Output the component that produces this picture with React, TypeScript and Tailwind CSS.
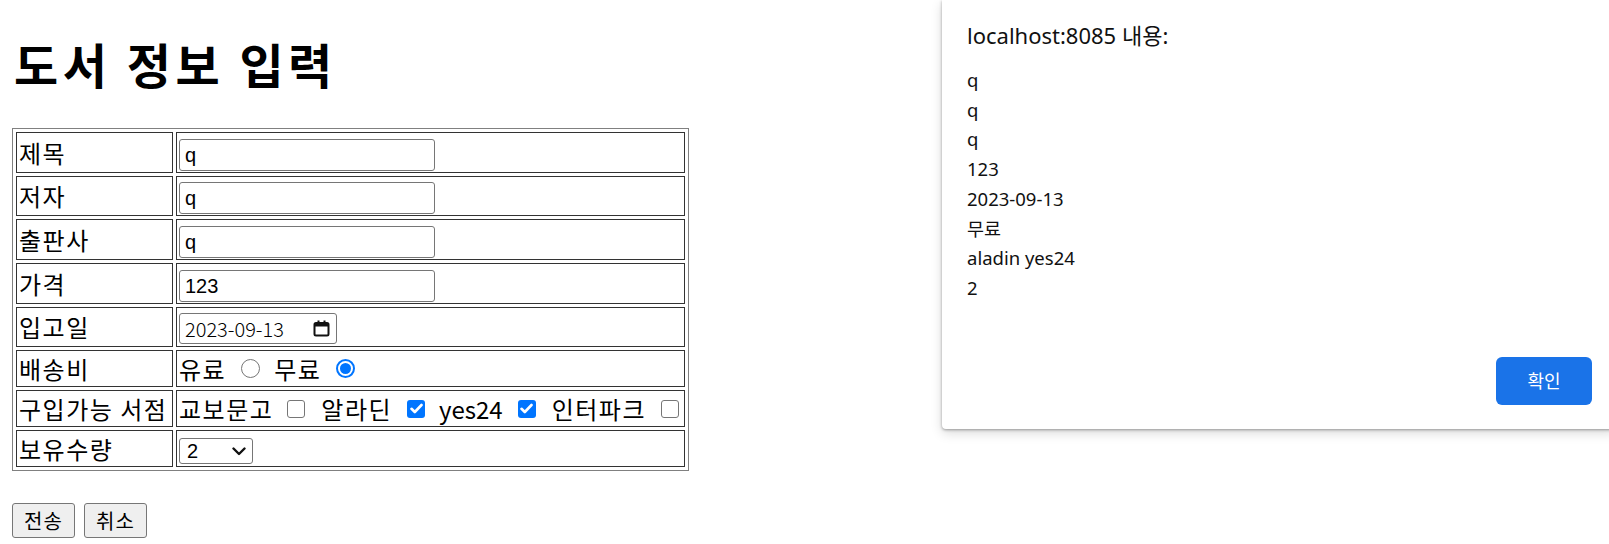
const kr = "font-['Noto_Sans_CJK_KR',sans-serif]";

function Radio({ checked }: { checked?: boolean }) {
  if (checked) {
    return (
      <span className="flex h-[19px] w-[19px] items-center justify-center rounded-full border-2 border-[#0075ff] bg-white">
        <span className="block h-[11px] w-[11px] rounded-full bg-[#0075ff]" />
      </span>
    );
  }
  return <span className="block h-[19px] w-[19px] rounded-full border-[1.5px] border-[#767676] bg-white" />;
}

function Check({ checked }: { checked?: boolean }) {
  if (checked) {
    return (
      <span className="flex h-[18px] w-[18px] items-center justify-center rounded-[3px] bg-[#0075ff]">
        <svg width="13" height="11" viewBox="0 0 13 11" fill="none">
          <path d="M1.5 5.8 L4.8 9 L11.5 2" stroke="white" strokeWidth="2.6" strokeLinecap="round" strokeLinejoin="round" />
        </svg>
      </span>
    );
  }
  return <span className="block h-[18px] w-[18px] rounded-[3px] border-[1.5px] border-[#767676] bg-white" />;
}

function TextBox({ value }: { value: string }) {
  return (
    <div className="flex h-[32px] w-[256px] items-center rounded-[3px] border border-[#767676] bg-white px-[5px] font-['Liberation_Sans',sans-serif] text-[20px]">
      {value}
    </div>
  );
}

function Label({ text, h }: { text: string; h: string }) {
  return (
    <div className={`flex items-center border border-[#333333] pl-[2px] text-[24px] tracking-[1.5px] whitespace-nowrap ${h}`}>
      {text}
    </div>
  );
}

export default function App() {
  return (
    <div className={`relative h-[544px] w-[1609px] overflow-hidden bg-white text-black ${kr}`}>
      <div className="pl-[12px] pt-[31px]">
        <h1 className="h-[64px] pl-[2px] text-[48px] font-bold leading-[64px] tracking-[4.5px]">도서 정보 입력</h1>

        <div className="mt-[33px] inline-block border border-[#808080] p-[3px]">
          <div className="grid grid-cols-[157px_509px] gap-[3px]">
            <Label text="제목" h="h-[41px]" />
            <div className="flex h-[41px] items-end border border-[#333333] pb-[1px] pl-[2px]">
              <TextBox value="q" />
            </div>

            <Label text="저자" h="h-[40px]" />
            <div className="flex h-[40px] items-end border border-[#333333] pb-[1px] pl-[2px]">
              <TextBox value="q" />
            </div>

            <Label text="출판사" h="h-[41px]" />
            <div className="flex h-[41px] items-end border border-[#333333] pb-[1px] pl-[2px]">
              <TextBox value="q" />
            </div>

            <Label text="가격" h="h-[41px]" />
            <div className="flex h-[41px] items-end border border-[#333333] pb-[1px] pl-[2px]">
              <TextBox value="123" />
            </div>

            <Label text="입고일" h="h-[40px]" />
            <div className="flex h-[40px] items-end border border-[#333333] pb-[2px] pl-[2px]">
              <div className="flex h-[31px] w-[158px] items-center justify-between rounded-[3px] border border-[#767676] bg-white pl-[5px] pr-[6px] text-[20px] font-light">
                <span>2023-09-13</span>
                <svg width="17" height="17" viewBox="0 0 17 17" fill="none">
                  <rect x="1.5" y="3" width="14" height="12.5" rx="1.5" stroke="#111" strokeWidth="2" />
                  <rect x="1.5" y="3" width="14" height="3.5" fill="#111" />
                  <rect x="4.5" y="0.5" width="2" height="3" fill="#111" />
                  <rect x="10.5" y="0.5" width="2" height="3" fill="#111" />
                </svg>
              </div>
            </div>

            <Label text="배송비" h="h-[37px]" />
            <div className="flex h-[37px] items-center border border-[#333333] pl-[2px] text-[24px]">
              <span className="tracking-[1.5px]">유료</span>
              <span className="ml-[15px]"><Radio /></span>
              <span className="ml-[14px] tracking-[1.5px]">무료</span>
              <span className="ml-[15px]"><Radio checked /></span>
            </div>

            <Label text="구입가능 서점" h="h-[37px]" />
            <div className="flex h-[37px] items-center border border-[#333333] pl-[2px] text-[24px] whitespace-nowrap">
              <span className="tracking-[1.5px]">교보문고</span>
              <span className="ml-[14px]"><Check /></span>
              <span className="ml-[16px] tracking-[1.5px]">알라딘</span>
              <span className="ml-[15px]"><Check checked /></span>
              <span className="ml-[14px]">yes24</span>
              <span className="ml-[15px]"><Check checked /></span>
              <span className="ml-[16px] tracking-[1.5px]">인터파크</span>
              <span className="ml-[15px]"><Check /></span>
            </div>

            <Label text="보유수량" h="h-[37px]" />
            <div className="flex h-[37px] items-end border border-[#333333] pb-[2px] pl-[2px]">
              <div className="flex h-[26px] w-[74px] items-center justify-between rounded-[3px] border border-[#767676] bg-white pl-[7px] pr-[6px] font-['Liberation_Sans',sans-serif] text-[20px]">
                <span>2</span>
                <svg width="14" height="9" viewBox="0 0 14 9" fill="none">
                  <path d="M1.5 1.5 L7 7 L12.5 1.5" stroke="#111" strokeWidth="2.4" strokeLinecap="round" strokeLinejoin="round" />
                </svg>
              </div>
            </div>
          </div>
        </div>

        <div className="mt-[32px] flex gap-[9px]">
          <button className="h-[35px] w-[63px] rounded-[3px] border border-[#767676] bg-[#efefef] text-[20px] tracking-[1px]">전송</button>
          <button className="h-[35px] w-[63px] rounded-[3px] border border-[#767676] bg-[#efefef] text-[20px] tracking-[1px]">취소</button>
        </div>
      </div>

      <div className="absolute left-[942px] top-0 flex h-[429px] w-[674px] flex-col rounded-b-[4px] bg-white pl-[25px] pr-[24px] pb-[24px] pt-[20px] font-['Noto_Sans','Noto_Sans_CJK_KR',sans-serif] text-[#111] shadow-[0_1px_3px_rgba(0,0,0,0.35),0_4px_12px_rgba(0,0,0,0.15)]">
        <div className="text-[22px] leading-[30px]">localhost:8085 내용:</div>
        <div className="mt-[15px] text-[18.5px] leading-[29.7px]">
          <div>q</div>
          <div>q</div>
          <div>q</div>
          <div>123</div>
          <div>2023-09-13</div>
          <div>무료</div>
          <div>aladin yes24</div>
          <div>2</div>
        </div>
        <div className="mt-auto flex justify-end">
          <button className="h-[48px] w-[96px] rounded-[6px] bg-[#1a73e8] text-[18px] text-white">확인</button>
        </div>
      </div>
    </div>
  );
}
